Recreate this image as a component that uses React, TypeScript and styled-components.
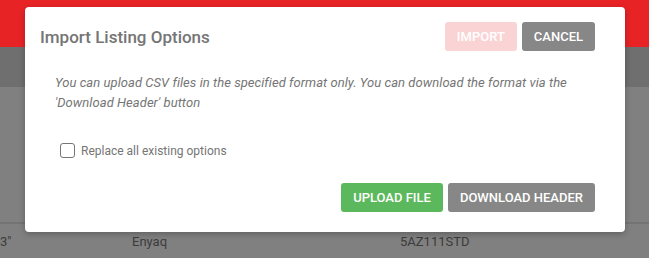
import React from "react";
import styled, { createGlobalStyle } from "styled-components";

const GlobalStyle = createGlobalStyle`
  html, body {
    margin: 0;
    padding: 0;
  }
  body {
    font-family: Roboto, "Liberation Sans", Arial, sans-serif;
    background: #808080;
    overflow: hidden;
  }
`;

const Page = styled.div`
  position: relative;
  width: 649px;
  height: 258px;
  background: #808080;
`;

const Header = styled.div`
  height: 47px;
  background: #e82326;
`;

const Toolbar = styled.div`
  height: 40px;
  background: #6f6f6f;
`;

const TableArea = styled.div`
  padding-top: 135px;
`;

const Divider = styled.div`
  height: 2px;
  background: #747474;
`;

const Row = styled.div`
  display: grid;
  grid-template-columns: 132px 268px 1fr;
  align-items: center;
  height: 34px;
  font-size: 13px;
  color: #3c3c3c;
`;

const Cell = styled.div`
  white-space: nowrap;
  overflow: hidden;
`;

const Modal = styled.div`
  position: absolute;
  left: 25px;
  top: 7px;
  width: 600px;
  height: 225px;
  box-sizing: border-box;
  background: #fff;
  border-radius: 4px;
  box-shadow: 0 2px 6px rgba(0, 0, 0, 0.25);
  padding: 15px 30px 20px 15px;
  display: flex;
  flex-direction: column;
`;

const ModalHeader = styled.div`
  display: flex;
  align-items: center;
  justify-content: space-between;
`;

const Title = styled.h2`
  margin: 0;
  font-size: 17px;
  font-weight: 500;
  color: #757575;
`;

const ButtonGroup = styled.div`
  display: flex;
  gap: 5px;
`;

const Button = styled.button<{ $tone: "import" | "grey" | "green" }>`
  height: 29px;
  padding: 0 12px;
  border: none;
  border-radius: 3px;
  font-family: Roboto, "Liberation Sans", Arial, sans-serif;
  font-size: 13px;
  font-weight: 500;
  text-transform: uppercase;
  color: #fff;
  cursor: pointer;
  background: ${({ $tone }) =>
    $tone === "import" ? "#fad4d4" : $tone === "green" ? "#5cb85c" : "#878787"};
`;

const Body = styled.p`
  margin: 22px 0 0 15px;
  max-width: 520px;
  font-size: 13px;
  font-style: italic;
  line-height: 20px;
  letter-spacing: 0.05px;
  color: #757575;
`;

const CheckRow = styled.label`
  display: flex;
  align-items: center;
  gap: 6px;
  margin: 30px 0 0 20px;
  font-size: 12px;
  color: #757575;
`;

const Box = styled.span`
  width: 13px;
  height: 13px;
  border: 1px solid #767676;
  border-radius: 3px;
  background: #fff;
`;

const Footer = styled.div`
  margin-top: auto;
  display: flex;
  justify-content: flex-end;
  gap: 5px;
`;

export default function App() {
  return (
    <Page>
      <GlobalStyle />
      <Header />
      <Toolbar />
      <TableArea>
        <Divider />
        <Row>
          <Cell>3"</Cell>
          <Cell>Enyaq</Cell>
          <Cell>5AZ111STD</Cell>
        </Row>
      </TableArea>
      <Modal>
        <ModalHeader>
          <Title>Import Listing Options</Title>
          <ButtonGroup>
            <Button $tone="import">Import</Button>
            <Button $tone="grey">Cancel</Button>
          </ButtonGroup>
        </ModalHeader>
        <Body>
          You can upload CSV files in the specified format only. You can download the format via the
          'Download Header' button
        </Body>
        <CheckRow>
          <Box />
          Replace all existing options
        </CheckRow>
        <Footer>
          <Button $tone="green">Upload File</Button>
          <Button $tone="grey">Download Header</Button>
        </Footer>
      </Modal>
    </Page>
  );
}
